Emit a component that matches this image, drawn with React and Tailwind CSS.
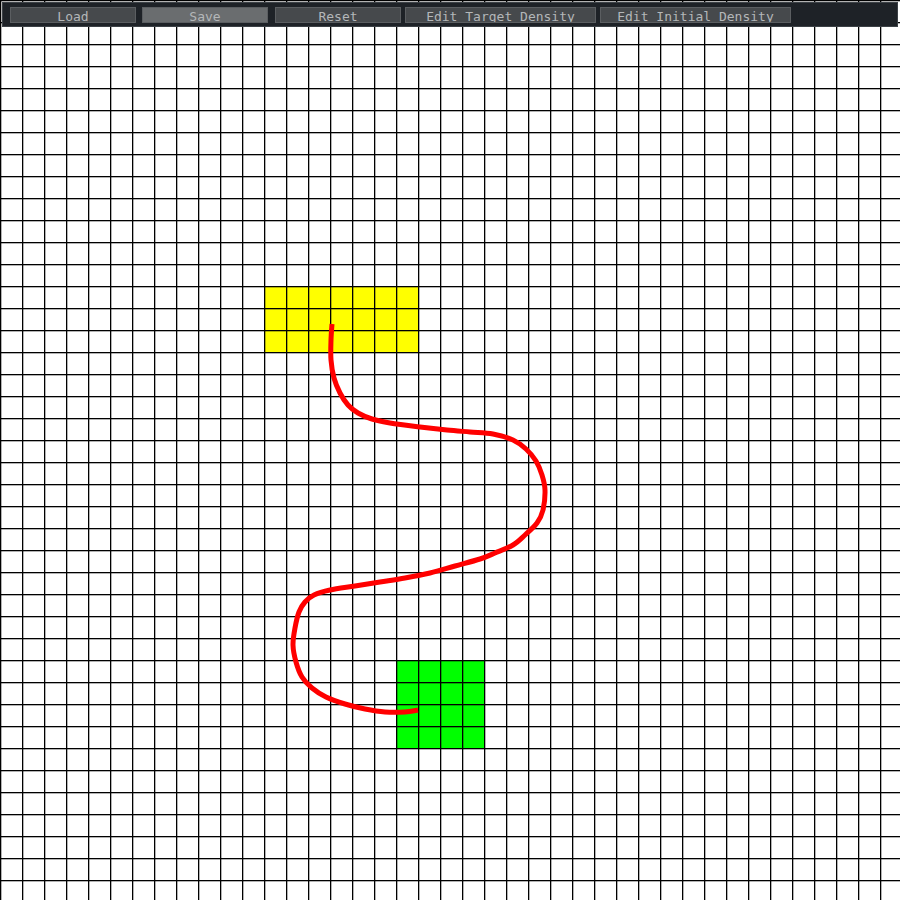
import React from "react";

const CELL = 22;
const LINES = Array.from({ length: 41 }, (_, i) => i * CELL);

// filled cells: [col, row, cols, rows, colour]
const BLOCKS = [
  [12, 13, 7, 3, "#ffff00"],
  [18, 30, 4, 4, "#00ff00"],
];

const PATH_POINTS = [
  [332, 324], [331, 340], [331, 360], [334, 378], [340, 393], [348, 405],
  [358, 413], [372, 419], [390, 423], [420, 427], [447, 430], [470, 432],
  [493, 434], [513, 440], [526, 449], [536, 461], [542, 475], [545, 490],
  [543, 510], [537, 523], [525, 535], [513, 545], [495, 553], [480, 559],
  [455, 566], [430, 573], [405, 578], [380, 582], [355, 586], [330, 590],
  [314, 595], [305, 602], [299, 612], [295, 628], [293, 645], [296, 662],
  [302, 677], [312, 688], [326, 697], [345, 704], [365, 709], [385, 712],
  [405, 712], [418, 710],
];

// catmull-rom -> cubic bezier so the stroke reads as one smooth hand-drawn line
function smoothPath(pts) {
  let d = `M${pts[0][0]},${pts[0][1]}`;
  for (let i = 0; i < pts.length - 1; i++) {
    const p0 = pts[i - 1] || pts[i];
    const p1 = pts[i];
    const p2 = pts[i + 1];
    const p3 = pts[i + 2] || p2;
    const c1x = p1[0] + (p2[0] - p0[0]) / 6;
    const c1y = p1[1] + (p2[1] - p0[1]) / 6;
    const c2x = p2[0] - (p3[0] - p1[0]) / 6;
    const c2y = p2[1] - (p3[1] - p1[1]) / 6;
    d += ` C${c1x},${c1y} ${c2x},${c2y} ${p2[0]},${p2[1]}`;
  }
  return d;
}

const BUTTONS = [
  { label: "Load", w: "w-[126px]", bg: "bg-[#46494c]", ml: "ml-0" },
  { label: "Save", w: "w-[126px]", bg: "bg-[#6a6d6f]", ml: "ml-[6px]" },
  { label: "Reset", w: "w-[126px]", bg: "bg-[#46494c]", ml: "ml-[7px]" },
  { label: "Edit Target Density", w: "w-[191px]", bg: "bg-[#46494c]", ml: "ml-[4px]" },
  { label: "Edit Initial Density", w: "w-[191px]", bg: "bg-[#46494c]", ml: "ml-[4px]" },
];

function Grid() {
  return (
    <svg width="900" height="900" viewBox="0 0 900 900" className="block">
      <rect width="900" height="900" fill="#ffffff" />
      {BLOCKS.map(([c, r, w, h, fill], i) => (
        <rect key={i} x={c * CELL} y={r * CELL} width={w * CELL} height={h * CELL} fill={fill} />
      ))}
      {LINES.map((p) => (
        <rect key={"v" + p} x={p} y="0" width="1.3" height="900" fill="#000" />
      ))}
      {LINES.map((p) => (
        <rect key={"h" + p} x="0" y={p} width="900" height="1.3" fill="#000" />
      ))}
      <path
        d={smoothPath(PATH_POINTS)}
        fill="none"
        stroke="#ff0000"
        strokeWidth="5"
        strokeLinejoin="round"
      />
    </svg>
  );
}

export default function App() {
  return (
    <div className="relative w-[900px] h-[900px] bg-white overflow-hidden">
      <Grid />

      {/* toolbar floats over the canvas */}
      <div className="absolute left-[2px] top-[2px] w-[896px] h-[25px] bg-[#1e2227] border border-[#3c4146] flex items-start pl-[7px] pt-[4px]">
        {BUTTONS.map((b) => (
          <div
            key={b.label}
            className={`${b.w} ${b.bg} ${b.ml} h-[16px] overflow-hidden border border-[#5b5e61] text-[#b4b7b9] text-[13px] leading-[15px] pt-[1px] text-center font-['DejaVu_Sans_Mono',monospace] whitespace-pre`}
          >
            {b.label}
          </div>
        ))}
      </div>
    </div>
  );
}
